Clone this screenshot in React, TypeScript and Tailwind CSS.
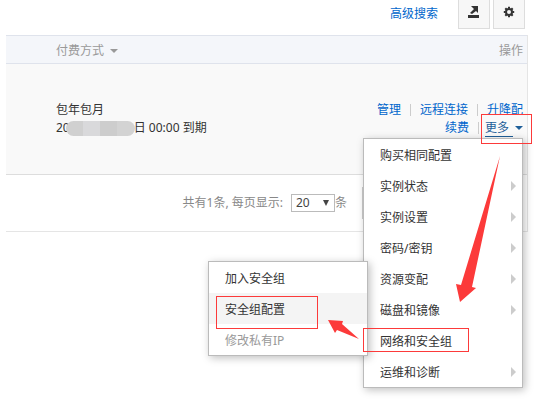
const actions = [
  { label: "购买相同配置", arrow: false },
  { label: "实例状态", arrow: true },
  { label: "实例设置", arrow: true },
  { label: "密码/密钥", arrow: true },
  { label: "资源变配", arrow: true },
  { label: "磁盘和镜像", arrow: true },
];

function ExportIcon() {
  return (
    <svg width="12" height="12" viewBox="0 0 12 12" fill="#333">
      <path d="M0 9h11v3H0z" />
      <path d="M3 0h7v7L8 5 4 8 2 7l4-4z" />
    </svg>
  );
}

function GearIcon() {
  return (
    <svg width="12" height="12" viewBox="0 0 12 12" fill="none" stroke="#333">
      <circle cx="6" cy="6" r="3" strokeWidth="2" />
      <path d="M6 0.8v1.6M6 9.6v1.6M0.8 6h1.6M9.6 6h1.6M2.3 2.3l1.2 1.2M8.5 8.5l1.2 1.2M2.3 9.7l1.2-1.2M8.5 3.5l1.2-1.2" strokeWidth="2" />
    </svg>
  );
}

function CaretDown({ className = "" }: { className?: string }) {
  return (
    <svg className={className} width="8" height="4" viewBox="0 0 8 4" fill="currentColor">
      <path d="M0 0h8L4 4z" />
    </svg>
  );
}

function CaretRight() {
  return (
    <svg width="5" height="10" viewBox="0 0 5 10" fill="#ccc">
      <path d="M0 0l5 5-5 5z" />
    </svg>
  );
}

function Divider() {
  return <span className="h-3 w-px bg-[#ccc]" />;
}

function SubMenu() {
  return (
    <ul className="absolute right-full bottom-0 -mr-1 w-40 border border-[#bbb] bg-white shadow-[2px_2px_8px_rgba(0,0,0,0.25)]">
      <li className="flex h-[31px] items-center px-4">
        <button className="pt-0.5">加入安全组</button>
      </li>
      <li className="relative flex h-[31px] items-center bg-[#f4f4f4] px-4">
        <button className="pt-0.5">安全组配置</button>
        <span className="absolute top-[3px] left-[7px] h-[33px] w-[102px] border border-[#fc3a3a]" />
      </li>
      <li className="flex h-[31px] items-center px-4 text-[#999]">
        <button className="pt-0.5" disabled>修改私有IP</button>
      </li>
    </ul>
  );
}

function MoreMenu() {
  return (
    <div className="absolute top-full right-0 mt-px w-[160px] border border-[#bbb] bg-white text-[#333] shadow-[2px_2px_8px_rgba(0,0,0,0.25)]">
      <ul>
        {actions.map((item) => (
          <li key={item.label} className="flex h-[31px] items-center justify-between pr-1.5 pl-4">
            <button className="pt-0.5">{item.label}</button>
            {item.arrow && <CaretRight />}
          </li>
        ))}
        <li className="relative flex h-[31px] items-center pl-4">
          <button className="pt-0.5">网络和安全组</button>
          <SubMenu />
          <span className="absolute top-[3px] -left-px h-6 w-[106px] border border-[#fc3a3a]" />
        </li>
        <li className="flex h-[31px] items-center justify-between pr-1.5 pl-4">
          <button className="pt-0.5">运维和诊断</button>
          <CaretRight />
        </li>
      </ul>
      <svg className="absolute top-4 left-[92px]" width="46" height="148" viewBox="0 0 46 148" fill="#fc3a3a">
        <path d="M44 1L16 132l4 1L4 147 0 129l5 1z" />
      </svg>
      <svg className="absolute top-[181px] -left-9" width="32" height="22" viewBox="0 0 32 22" fill="#fc3a3a">
        <path d="M0 0l15 1-1 3 17 15-22-9-2 3z" />
      </svg>
    </div>
  );
}

export default function App() {
  return (
    <main className="min-h-screen bg-white pr-[9px] pl-1.5 text-xs text-[#333] [font-family:'Noto_Sans','Noto_Sans_CJK_SC',sans-serif]">
      <div className="flex h-[35px] items-start justify-end pr-[3px]">
        <a href="#search" className="mr-5 leading-7 text-[#06c]">高级搜索</a>
        <div className="flex gap-[3px]">
          <button aria-label="导出" className="flex h-[29px] w-8 items-center justify-center border border-t-0 border-[#ddd] bg-[#f7f7f7] pb-1">
            <ExportIcon />
          </button>
          <button aria-label="设置" className="flex h-[29px] w-8 items-center justify-center border border-t-0 border-[#ddd] bg-[#f7f7f7] pb-1">
            <GearIcon />
          </button>
        </div>
      </div>

      <div className="border-r border-[#e5e5e5]">
        <table className="w-full border-separate border-spacing-0">
          <thead>
            <tr className="h-[29px] bg-[#f4f6fa] text-left text-[#999]">
              <th className="border-y border-[#dfe3ec] pt-0.5 pb-0 pl-[50px] font-normal">
                <span className="flex items-center gap-1.5">付费方式 <CaretDown /></span>
              </th>
              <th className="border-y border-[#dfe3ec] pt-0.5 pr-1 pb-0 text-right font-normal">操作</th>
            </tr>
          </thead>
          <tbody>
            <tr className="h-[111px] bg-[#f9f9f9] leading-[18px]">
              <td className="border-b border-[#ddd] py-0 pl-[50px]">
                <p>包年包月</p>
                <p className="flex items-center">
                  20
                  <span className="z-10 -ml-1 -mr-px flex h-[15px] w-[69px] overflow-hidden rounded-lg">
                    <span className="flex-1 bg-[#d0d0d0]" />
                    <span className="flex-1 bg-[#d9d9db]" />
                    <span className="flex-1 bg-[#cdcdcd]" />
                    <span className="flex-1 bg-[#d3d3d3]" />
                  </span>
                  <span>日 00:00 到期</span>
                </p>
              </td>
              <td className="border-b border-[#ddd] py-0 pr-1">
                <div className="relative text-[#06c]">
                  <div className="flex items-center justify-end gap-[9px]">
                    <a href="#manage">管理</a>
                    <Divider />
                    <a href="#connect">远程连接</a>
                    <Divider />
                    <a href="#resize">升降配</a>
                  </div>
                  <div className="relative flex items-center justify-end">
                    <a href="#renew" className="mr-[9px]">续费</a>
                    <Divider />
                    <button className="ml-1.5 flex items-center text-[#1f5f99]">
                      <span className="border-b border-[#1f5f99] pr-1 leading-4">更多</span>
                      <CaretDown className="ml-0.5" />
                    </button>
                    <MoreMenu />
                    <span className="absolute -right-[9px] -bottom-[7px] h-[30px] w-[51px] border border-[#fc3a3a]" />
                  </div>
                </div>
              </td>
            </tr>
          </tbody>
        </table>

        <div className="flex h-[57px] items-center justify-end border-b border-[#e5e5e5] pr-1 text-[#888]">
          <label htmlFor="page-size" className="mr-2">共有1条, 每页显示:</label>
          <div className="relative">
            <select id="page-size" className="block h-[18px] w-11 appearance-none border border-[#bbb] bg-white pl-1 leading-4 text-[#444]">
              <option>20</option>
            </select>
            <svg className="pointer-events-none absolute top-1.5 right-1.5" width="6" height="6" viewBox="0 0 6 6" fill="#444">
              <path d="M0 0h6L3 6z" />
            </svg>
          </div>
          <span>条</span>
          <div className="ml-[15px] h-8 w-[161px] border border-[#ccc]" />
        </div>
      </div>
    </main>
  );
}
